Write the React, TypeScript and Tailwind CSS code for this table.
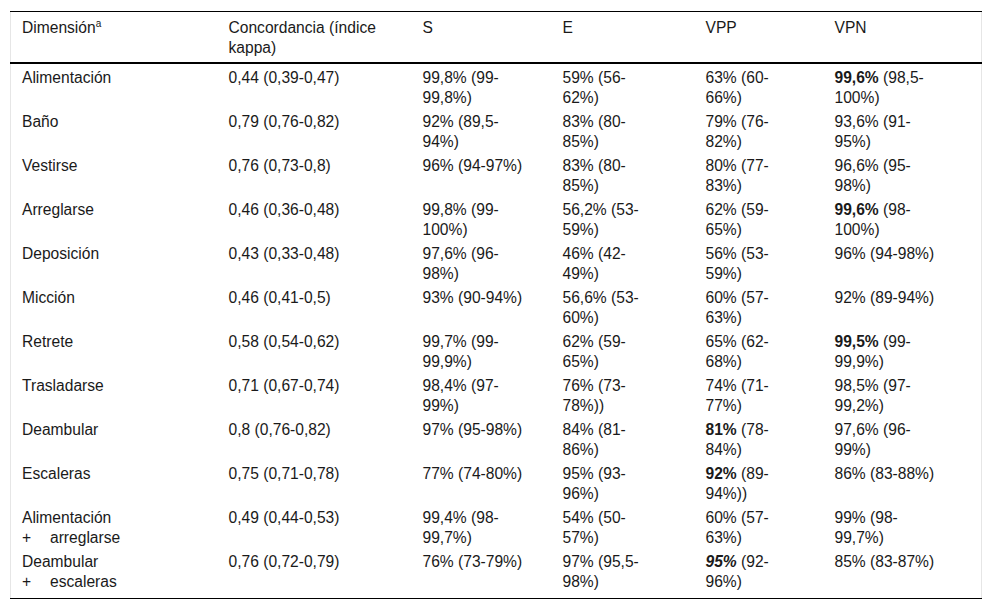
import type { ReactNode } from "react";

type Row = {
  dim: ReactNode;
  kappa: string;
  s: ReactNode;
  e: ReactNode;
  vpp: ReactNode;
  vpn: ReactNode;
};

const B = ({ children }: { children: ReactNode }) => <b className="font-bold">{children}</b>;

function Combo({ first, second }: { first: string; second: string }) {
  return (
    <>
      <div>{first}</div>
      <div className="flex">
        <span className="w-[28px]">+</span>
        <span>{second}</span>
      </div>
    </>
  );
}

const rows: Row[] = [
  { dim: "Alimentación", kappa: "0,44 (0,39-0,47)", s: "99,8% (99-99,8%)", e: "59% (56-62%)", vpp: "63% (60-66%)", vpn: <><B>99,6%</B> (98,5-100%)</> },
  { dim: "Baño", kappa: "0,79 (0,76-0,82)", s: "92% (89,5-94%)", e: "83% (80-85%)", vpp: "79% (76-82%)", vpn: "93,6% (91-95%)" },
  { dim: "Vestirse", kappa: "0,76 (0,73-0,8)", s: "96% (94-97%)", e: "83% (80-85%)", vpp: "80% (77-83%)", vpn: "96,6% (95-98%)" },
  { dim: "Arreglarse", kappa: "0,46 (0,36-0,48)", s: "99,8% (99-100%)", e: "56,2% (53-59%)", vpp: "62% (59-65%)", vpn: <><B>99,6%</B> (98-100%)</> },
  { dim: "Deposición", kappa: "0,43 (0,33-0,48)", s: "97,6% (96-98%)", e: "46% (42-49%)", vpp: "56% (53-59%)", vpn: "96% (94-98%)" },
  { dim: "Micción", kappa: "0,46 (0,41-0,5)", s: "93% (90-94%)", e: "56,6% (53-60%)", vpp: "60% (57-63%)", vpn: "92% (89-94%)" },
  { dim: "Retrete", kappa: "0,58 (0,54-0,62)", s: "99,7% (99-99,9%)", e: "62% (59-65%)", vpp: "65% (62-68%)", vpn: <><B>99,5%</B> (99-99,9%)</> },
  { dim: "Trasladarse", kappa: "0,71 (0,67-0,74)", s: "98,4% (97-99%)", e: "76% (73-78%))", vpp: "74% (71-77%)", vpn: "98,5% (97-99,2%)" },
  { dim: "Deambular", kappa: "0,8 (0,76-0,82)", s: "97% (95-98%)", e: "84% (81-86%)", vpp: <><B>81%</B> (78-84%)</>, vpn: "97,6% (96-99%)" },
  { dim: "Escaleras", kappa: "0,75 (0,71-0,78)", s: "77% (74-80%)", e: "95% (93-96%)", vpp: <><B>92%</B> (89-94%))</>, vpn: "86% (83-88%)" },
  { dim: <Combo first="Alimentación" second="arreglarse" />, kappa: "0,49 (0,44-0,53)", s: "99,4% (98-99,7%)", e: "54% (50-57%)", vpp: "60% (57-63%)", vpn: "99% (98-99,7%)" },
  { dim: <Combo first="Deambular" second="escaleras" />, kappa: "0,76 (0,72-0,79)", s: "76% (73-79%)", e: "97% (95,5-98%)", vpp: <><b className="font-bold italic">95%</b> (92-96%)</>, vpn: "85% (83-87%)" },
];

const cell = "align-top text-left font-normal";
const pad = [
  "pl-[11px] pr-[20px]",
  "pl-[12px] pr-[22px]",
  "pl-[12px] pr-[20px]",
  "pl-[12px] pr-[36px]",
  "pl-[12px] pr-[22px]",
  "pl-[12px] pr-[38px]",
];

export default function App() {
  return (
    <div className="bg-white min-h-screen pt-[11px] pl-[10px] font-['Liberation_Sans',Arial,sans-serif] text-[15.6px] leading-[20px] text-[#1a1a1a]">
      <table className="table-fixed w-[971px] border-collapse border-x border-x-[#e6e6e6]">
        <colgroup>
          <col className="w-[206px]" />
          <col className="w-[194px]" />
          <col className="w-[140px]" />
          <col className="w-[143px]" />
          <col className="w-[129px]" />
          <col className="w-[159px]" />
        </colgroup>
        <thead>
          <tr className="border-t border-t-black border-b-2 border-b-black">
            <th className={`${cell} ${pad[0]} pt-[6px] pb-[4px]`}>
              Dimensión<sup className="text-[10px] top-[-6px]">a</sup>
            </th>
            <th className={`${cell} ${pad[1]} pt-[6px] pb-[4px]`}>Concordancia (índice kappa)</th>
            <th className={`${cell} ${pad[2]} pt-[6px] pb-[4px]`}>S</th>
            <th className={`${cell} ${pad[3]} pt-[6px] pb-[4px]`}>E</th>
            <th className={`${cell} ${pad[4]} pt-[6px] pb-[4px]`}>VPP</th>
            <th className={`${cell} ${pad[5]} pt-[6px] pb-[4px]`}>VPN</th>
          </tr>
        </thead>
        <tbody className="border-b border-b-black">
          {rows.map((r, i) => {
            const py = i === rows.length - 1 ? "pt-[4px] pb-[6px]" : "pt-[4px] pb-0";
            return (
              <tr key={i}>
                <td className={`${cell} ${pad[0]} ${py}`}>{r.dim}</td>
                <td className={`${cell} ${pad[1]} ${py}`}>{r.kappa}</td>
                <td className={`${cell} ${pad[2]} ${py}`}>{r.s}</td>
                <td className={`${cell} ${pad[3]} ${py}`}>{r.e}</td>
                <td className={`${cell} ${pad[4]} ${py}`}>{r.vpp}</td>
                <td className={`${cell} ${pad[5]} ${py}`}>{r.vpn}</td>
              </tr>
            );
          })}
        </tbody>
      </table>
    </div>
  );
}
